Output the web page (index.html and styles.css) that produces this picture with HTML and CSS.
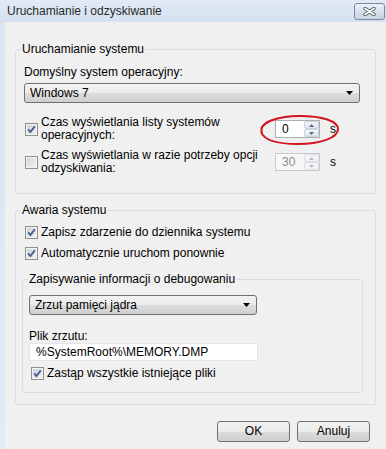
FILE: index.html
```html
<!DOCTYPE html>
<html>

<head>
    <title>Uruchamianie i odzyskiwanie</title>

    <link rel="stylesheet" href="styles.css">
</head>

<body>
    <div class="window">
        <div class="titlebar">
            <span class="title">Uruchamianie i odzyskiwanie</span>
            <span class="close-btn">
                <svg width="13" height="9" viewBox="0 0 13 9">
                    <path d="M2 1.5 L11 7.5 M11 1.5 L2 7.5" stroke="#59616c" stroke-width="3.4" stroke-linecap="round" />
                    <path d="M2 1.5 L11 7.5 M11 1.5 L2 7.5" stroke="#ffffff" stroke-width="1.6" stroke-linecap="round" />
                </svg>
            </span>
        </div>

        <div class="frame">
            <div class="client">
                <fieldset class="group group-startup">
                    <legend>Uruchamianie systemu</legend>

                    <div class="field-label">Domyślny system operacyjny:</div>
                    <div class="select select-os">
                        <span>Windows 7</span>
                        <svg class="arrow" width="7" height="4" viewBox="0 0 7 4"><path d="M0 0 H7 L3.5 4 Z" fill="#000" /></svg>
                    </div>

                    <div class="opt-row opt-first">
                        <div class="check">
                            <span class="box checked">
                                <svg width="11" height="11" viewBox="0 0 11 11"><path d="M2.2 5.4 L4.4 8 L8.8 2.4" fill="none" stroke="#4a5e86" stroke-width="1.9" /></svg>
                            </span>
                            <span class="check-text">Czas wyświetlania listy systemów<br>operacyjnych:</span>
                        </div>
                        <div class="spin-wrap">
                            <div class="spin">
                                <span class="spin-value">0</span>
                                <span class="spin-btns">
                                    <span class="spin-btn"><svg width="5" height="3" viewBox="0 0 5 3"><path d="M0 3 H5 L2.5 0 Z" fill="#4f6b94" /></svg></span>
                                    <span class="spin-btn"><svg width="5" height="3" viewBox="0 0 5 3"><path d="M0 0 H5 L2.5 3 Z" fill="#4f6b94" /></svg></span>
                                </span>
                            </div>
                            <span class="unit">s</span>
                            <svg class="ring" width="86" height="34" viewBox="0 0 86 34">
                                <path d="M6 20 C2 10 20 3 44 3 C66 3 82 8 82 16 C82 25 64 31 42 31 C22 31 8 27 5 19" fill="none" stroke="#d3141c" stroke-width="2" />
                            </svg>
                        </div>
                    </div>

                    <div class="opt-row opt-second">
                        <div class="check">
                            <span class="box"></span>
                            <span class="check-text">Czas wyświetlania w razie potrzeby opcji<br>odzyskiwania:</span>
                        </div>
                        <div class="spin-wrap">
                            <div class="spin disabled">
                                <span class="spin-value">30</span>
                                <span class="spin-btns">
                                    <span class="spin-btn"><svg width="5" height="3" viewBox="0 0 5 3"><path d="M0 3 H5 L2.5 0 Z" fill="#b4bcc6" /></svg></span>
                                    <span class="spin-btn"><svg width="5" height="3" viewBox="0 0 5 3"><path d="M0 0 H5 L2.5 3 Z" fill="#b4bcc6" /></svg></span>
                                </span>
                            </div>
                            <span class="unit">s</span>
                        </div>
                    </div>
                </fieldset>

                <fieldset class="group group-crash">
                    <legend>Awaria systemu</legend>

                    <div class="check check-line">
                        <span class="box checked">
                            <svg width="11" height="11" viewBox="0 0 11 11"><path d="M2.2 5.4 L4.4 8 L8.8 2.4" fill="none" stroke="#4a5e86" stroke-width="1.9" /></svg>
                        </span>
                        <span>Zapisz zdarzenie do dziennika systemu</span>
                    </div>
                    <div class="check check-line check-gap">
                        <span class="box checked">
                            <svg width="11" height="11" viewBox="0 0 11 11"><path d="M2.2 5.4 L4.4 8 L8.8 2.4" fill="none" stroke="#4a5e86" stroke-width="1.9" /></svg>
                        </span>
                        <span>Automatycznie uruchom ponownie</span>
                    </div>

                    <fieldset class="group group-debug">
                        <legend>Zapisywanie informacji o debugowaniu</legend>

                        <div class="select select-dump">
                            <span>Zrzut pamięci jądra</span>
                            <svg class="arrow" width="7" height="4" viewBox="0 0 7 4"><path d="M0 0 H7 L3.5 4 Z" fill="#000" /></svg>
                        </div>

                        <div class="field-label dump-label">Plik zrzutu:</div>
                        <div class="textbox">%SystemRoot%\MEMORY.DMP</div>

                        <div class="check check-line overwrite">
                            <span class="box checked">
                                <svg width="11" height="11" viewBox="0 0 11 11"><path d="M2.2 5.4 L4.4 8 L8.8 2.4" fill="none" stroke="#4a5e86" stroke-width="1.9" /></svg>
                            </span>
                            <span>Zastąp wszystkie istniejące pliki</span>
                        </div>
                    </fieldset>
                </fieldset>

                <div class="buttons">
                    <span class="btn">OK</span>
                    <span class="btn">Anuluj</span>
                </div>
            </div>
        </div>
    </div>
</body>

</html>
```

FILE: styles.css
```css
body {
    margin: 0;
    font-family: 'Liberation Sans', Arial, sans-serif;
    font-size: 12px;
    color: #000;
}

.window {
    width: 386px;
    height: 449px;
    display: flex;
    flex-direction: column;
    overflow: hidden;
    background-color: #d9e5f3;
}

.titlebar {
    height: 22px;
    flex: none;
    display: flex;
    align-items: center;
    padding: 0 1px 0 7px;
    background: linear-gradient(#e1eaf5, #d4e1f0);
    color: #2a2a2a;
}

.close-btn {
    margin-left: auto;
    width: 31px;
    height: 17px;
    box-sizing: border-box;
    border: 1px solid #7c8898;
    border-radius: 3px;
    background: linear-gradient(#eef3f9, #d6e0ec 50%, #c8d4e3);
    display: flex;
    align-items: center;
    justify-content: center;
}

.frame {
    flex: 1;
    display: flex;
    padding-left: 5px;
    background: linear-gradient(#d9e5f3, #e3ebf5);
}

.client {
    flex: 1;
    background-color: #f0f0f0;
    padding: 20px 10px 0 10px;
}

/* group boxes */
.group {
    margin: 0;
    min-width: 0;
    border: 1px solid #d5dfe5;
    border-radius: 3px;
}

.group legend {
    padding: 0 1px;
    line-height: 14px;
}

.group-startup {
    padding: 9px 15px 18px 8px;
}

.group-startup legend {
    margin-left: -3px;
}

.group-crash {
    margin-top: 9px;
    padding: 8px 12px 11px 6px;
}

.group-crash legend {
    margin-left: -1px;
}

.group-debug {
    margin-top: 12px;
    padding: 9px 12px 12px 6px;
}

.field-label {
    line-height: 14px;
}

/* combo boxes */
.select {
    height: 20px;
    box-sizing: border-box;
    border: 1px solid #707070;
    border-radius: 3px;
    background: linear-gradient(#f2f2f2, #ebebeb 50%, #dddddd 50%, #cfcfcf);
    display: flex;
    align-items: center;
    padding: 0 6px 0 5px;
}

.select .arrow {
    margin-left: auto;
}

.select-os {
    margin-top: 4px;
}

.select-dump {
    width: 228px;
}

/* checkboxes */
.check {
    display: flex;
    align-items: center;
    gap: 3px;
    padding-left: 1px;
}

.box {
    width: 13px;
    height: 13px;
    box-sizing: border-box;
    flex: none;
    border: 1px solid #8f8f8f;
    background: linear-gradient(135deg, #cdd1d6, #f7f7f7);
    box-shadow: inset 0 0 0 1px #f4f4f4;
    display: flex;
    align-items: center;
    justify-content: center;
}

.box.checked {
    background: linear-gradient(135deg, #c6d0dc, #f2f5f9);
}

.check-text {
    line-height: 13px;
}

.check-line {
    line-height: 14px;
    padding-left: 3px;
}

.check-gap {
    margin-top: 7px;
}

/* timeout rows */
.opt-row {
    display: flex;
    align-items: center;
}

.opt-row .check {
    width: 250px;
}

.opt-first {
    margin-top: 13px;
}

.opt-second {
    margin-top: 7px;
}

.spin-wrap {
    position: relative;
    display: flex;
    align-items: center;
}

.spin {
    width: 45px;
    height: 18px;
    box-sizing: border-box;
    border: 1px solid #abadb3;
    background-color: #fff;
    display: flex;
}

.spin-value {
    flex: 1;
    padding-left: 6px;
    line-height: 16px;
}

.spin-btns {
    width: 15px;
    display: flex;
    flex-direction: column;
}

.spin-btn {
    flex: 1;
    box-sizing: border-box;
    border: 1px solid #c9d1da;
    border-radius: 2px;
    background: linear-gradient(#f6f8fa, #dde3ea);
    display: flex;
    align-items: center;
    justify-content: center;
}

.spin.disabled {
    border-color: #c6cbd0;
    background-color: #f7f7f7;
    color: #8d8d8d;
}

.spin.disabled .spin-btn {
    border-color: #dde1e5;
    background: #f4f4f4;
}

.unit {
    margin-left: 10px;
}

.ring {
    position: absolute;
    left: -19px;
    top: -7px;
}

/* dump file */
.dump-label {
    margin-top: 15px;
    line-height: 13px;
}

.textbox {
    width: 229px;
    height: 18px;
    box-sizing: border-box;
    border: 1px solid #e2e6ea;
    background-color: #fff;
    padding-left: 6px;
    line-height: 16px;
}

.overwrite {
    margin-top: 5px;
    padding-left: 2px;
}

/* dialog buttons */
.buttons {
    margin-top: 16px;
    display: flex;
    justify-content: flex-end;
    gap: 7px;
    padding-right: 6px;
}

.btn {
    width: 73px;
    height: 21px;
    box-sizing: border-box;
    border: 1px solid #707070;
    border-radius: 3px;
    background: linear-gradient(#f2f2f2, #ebebeb 50%, #dddddd 50%, #cfcfcf);
    text-align: center;
    line-height: 19px;
}
```
